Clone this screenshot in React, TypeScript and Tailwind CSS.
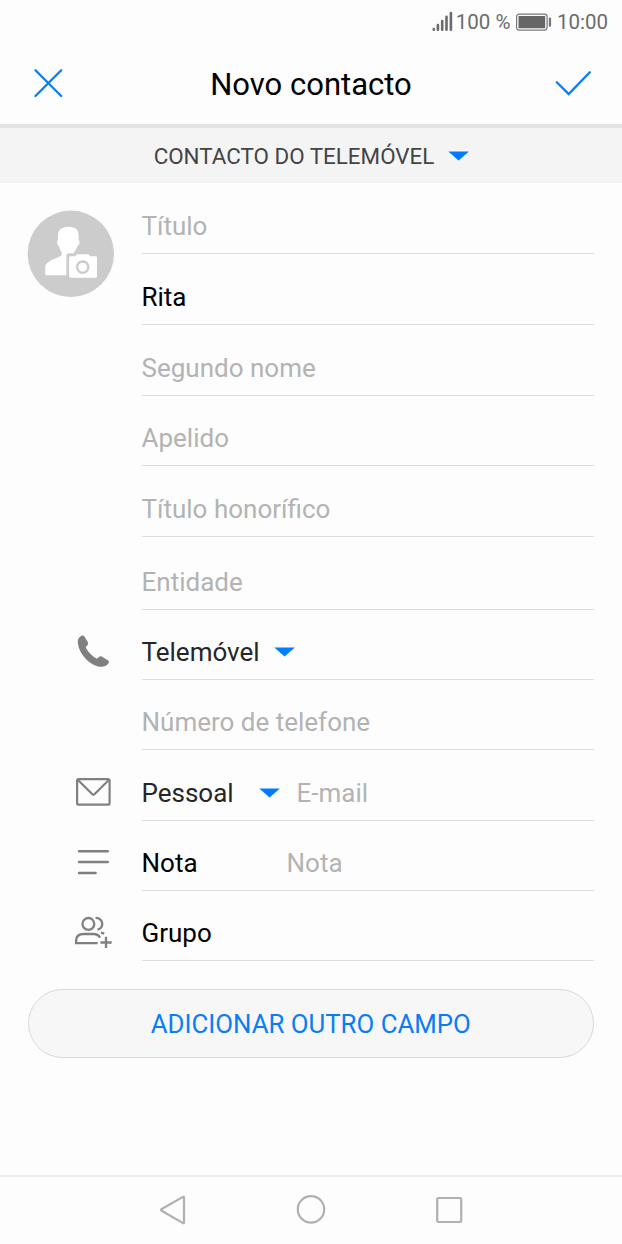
import type { ReactNode } from 'react';

function Caret({ className = '' }: { className?: string }) {
  return (
    <svg className={'h-[10px] w-[22px] shrink-0 ' + className} viewBox="0 0 22 10">
      <path d="M0.300 0.500H20.900L10.600 9.400Z" fill="#007dff" />
    </svg>
  );
}

function Row({ icon, height, children }: { icon?: ReactNode; height: string; children: ReactNode }) {
  return (
    <div className={'flex shrink-0 pr-7 ' + height}>
      <div className="w-[141.5px] shrink-0">{icon}</div>
      <div className="flex flex-1 items-end border-b border-[#dddddd] pb-3 text-[26px] leading-[30px]">
        {children}
      </div>
    </div>
  );
}

function Hint({ children, className = '' }: { children: ReactNode; className?: string }) {
  return <span className={'whitespace-nowrap text-[#b3b3b3] ' + className}>{children}</span>;
}

const iconBox = 'block h-[71px] w-[141px]';

const avatar = (
  <svg className="block h-[120px] w-[141px]" viewBox="0 183 141 120">
    <circle cx="70.8" cy="253.8" r="43.2" fill="#cccccc" />
    <path
      d="M68.8 226.8c-6.200 0-10.800 2.800-10.800 8.400v4.800c-1.400.6-1.200 5 .7 5.700 1 3.800 2.400 5.200 3 6.500v2c0 1.800-2.500 2.500-5.500 3.800-5.500 2.400-11 4.800-11 9.500v6.500q0 1.200 1.200 1.200H66.400V256q0-2.800 2.800-2.800h4.600c.4-2 2.800-3.600 3.900-7.500 2.200-.8 2.400-5 .9-5.700v-4.800c0-5.600-3.600-8.400-9.800-8.400Z"
      fill="#ffffff"
    />
    <path
      fillRule="evenodd"
      d="M70.500 256.300h5l1.200-2h12l1.200 2h5.700q1.400 0 1.400 1.400v18.600q0 1.400-1.400 1.400H70.500q-1.400 0-1.400-1.400v-18.600q0-1.400 1.400-1.400ZM82.700 260.300a6.800 6.800 0 1 0 .01 0ZM82.700 262.700a4.400 4.400 0 1 1-.01 0Z"
      fill="#ffffff"
    />
  </svg>
);

const phone = (
  <svg className={iconBox} viewBox="0 610 141 71">
    <path
      d="M81.500 635.700c1.200-.6 2.300 0 3 1l3.200 5.400c.7 1.200.6 2.300-.3 3.200l-1.700 1.700c1.500 4.300 6.500 9.300 11.200 11.700l2-1.700c1-.8 2-.9 3.200-.3l5.700 3.500c1.200.8 1.500 1.700.8 2.800-1.700 2.800-4.500 4.100-8.500 3.700-10.500-1.300-21.500-13.200-22.300-24.300-.2-3 1-5.400 3.700-6.700Z"
      fill="#808080"
    />
  </svg>
);

const mail = (
  <svg className={iconBox} viewBox="0 750 141 71" fill="none" stroke="#808080" strokeWidth="2.200" strokeLinejoin="round">
    <rect x="77.100" y="779.100" width="32.500" height="25.600" rx="1.800" />
    <path d="m77.700 779.800 14.700 14.500q1 1 2 0l14.700-14.500" />
  </svg>
);

const note = (
  <svg className={iconBox} viewBox="0 821 141 71" fill="none" stroke="#808080" strokeWidth="2.400" strokeLinecap="round">
    <path d="M79 851.200h28.800M79 862h28.800M79 873h16.600" />
  </svg>
);

const group = (
  <svg className={iconBox} viewBox="0 891 141 71" fill="none" stroke="#808080" strokeWidth="2.300">
    <circle cx="88.400" cy="923.900" r="5.900" />
    <path d="M95.500 917.900c3.900-.2 6.800 2.600 6.800 6 0 2.800-1.800 4.900-4.800 5.700" />
    <path d="M97.600 943.200H76.100v-2.500c0-4.600 2.800-6.700 7.600-6.700h9.600c3.400 0 5.500 1.100 6.700 3.700" />
    <path d="M101 932.700q1.700.300 3.200 1.100M106 936.700v11.300M100.500 942.500h11.200" />
  </svg>
);

export default function App() {
  return (
    <div className="flex h-[1244px] w-[622px] flex-col overflow-hidden bg-[#fdfdfd] font-['Roboto',sans-serif] text-black">
      <header className="shrink-0">
        <div className="flex h-[43px] items-center justify-end pr-[14px] pt-[2px] text-[20.500px] text-[#6b6b6b]">
          <svg className="mr-[3.500px] h-[20px] w-[22px] overflow-visible" viewBox="0 2 22 20" stroke="#6b6b6b" strokeWidth="2.600" strokeLinecap="round">
            <path d="M3.800 18v.7M7.900 14v4.700M12.200 10v8.700M16.500 5.800v12.900M20.900 2v16.700" />
          </svg>
          <span className="whitespace-nowrap">100 %</span>
          <svg className="ml-[5.500px] mr-[5px] h-[18px] w-[36px] overflow-visible" viewBox="0 0 36 18">
            <rect x=".6" y=".1" width="30.500" height="16" rx="2.500" fill="none" stroke="#777777" strokeWidth="1.200" />
            <rect x="2.500" y="2" width="26.700" height="12.200" rx=".5" fill="#666666" />
            <rect x="32.800" y="3.500" width="2.300" height="9.200" rx="1" fill="#777777" />
          </svg>
          <span>10:00</span>
        </div>
        <div className="flex h-[81px] items-center justify-between pl-[33px] pr-[30px]">
          <svg className="h-[30px] w-[30px]" viewBox="0 0 30 30" fill="none" stroke="#0a7df5" strokeWidth="2.300" strokeLinecap="round">
            <path d="M2.500 1.300 28.200 27M28.200 1.300 2.500 27" />
          </svg>
          <h1 className="ml-1 pt-[2px] text-[31px] font-normal leading-[36px]">Novo contacto</h1>
          <svg className="h-[26px] w-[37px]" viewBox="0 0 37 26" fill="none" stroke="#0a7df5" strokeWidth="2.300" strokeLinecap="round">
            <path d="M1.800 11.300 13.700 23.100 34.800 1.300" />
          </svg>
        </div>
      </header>

      <div className="flex h-[59px] shrink-0 items-center justify-center border-t-4 border-[#e2e2e2] bg-[#f4f4f4] pl-[2px] text-[22.400px] text-[#444444]">
        <span className="pt-[3px]">CONTACTO DO TELEMÓVEL</span>
        <Caret className="ml-[14px] mt-px" />
      </div>

      <main className="flex flex-1 flex-col">
        <Row height="h-[71px]" icon={avatar}><Hint>Título</Hint></Row>
        <Row height="h-[71px]">Rita</Row>
        <Row height="h-[71px]"><Hint>Segundo nome</Hint></Row>
        <Row height="h-[70px]"><Hint>Apelido</Hint></Row>
        <Row height="h-[71px]"><Hint>Título honorífico</Hint></Row>
        <Row height="h-[73px]"><Hint>Entidade</Hint></Row>
        <Row height="h-[70px]" icon={phone}>
          <span className="text-[#262626]">Telemóvel</span>
          <Caret className="mb-[10px] ml-[14px]" />
        </Row>
        <Row height="h-[70px]"><Hint>Número de telefone</Hint></Row>
        <Row height="h-[71px]" icon={mail}>
          <span className="w-[117px] text-[#262626]">Pessoal</span>
          <Caret className="mb-[10px]" />
          <Hint className="ml-4">E-mail</Hint>
        </Row>
        <Row height="h-[70px]" icon={note}>
          <span className="w-[145px]">Nota</span>
          <Hint>Nota</Hint>
        </Row>
        <Row height="h-[70px]" icon={group}>Grupo</Row>
        <button className="ml-[27.500px] mr-7 mt-7 h-[69px] shrink-0 rounded-full border border-[#d9d9d9] bg-[#f7f7f7] pt-[2px] text-[25.800px] text-[#0a7df5]">
          ADICIONAR OUTRO CAMPO
        </button>
      </main>

      <nav className="flex h-[69px] shrink-0 items-center justify-center gap-[108px] border-t-2 border-[#ebebeb] pb-px">
        <svg className="h-[30px] w-[30px]" viewBox="0 0 30 30" fill="none" stroke="#b0b0b0" strokeWidth="2.200" strokeLinejoin="round">
          <path d="M25 1.900q1-.5 1 .6v25q0 1.100-1 .6L3.700 15.800q-1.200-.9 0-1.800Z" />
        </svg>
        <svg className="h-[30px] w-[30px]" viewBox="0 0 30 30" fill="none" stroke="#b0b0b0" strokeWidth="2.200">
          <circle cx="15" cy="14.400" r="13.200" />
        </svg>
        <svg className="h-[30px] w-[30px]" viewBox="0 0 30 30" fill="none" stroke="#b0b0b0" strokeWidth="2.200">
          <rect x="3.200" y="3" width="24" height="24" rx="1.200" />
        </svg>
      </nav>
    </div>
  );
}
